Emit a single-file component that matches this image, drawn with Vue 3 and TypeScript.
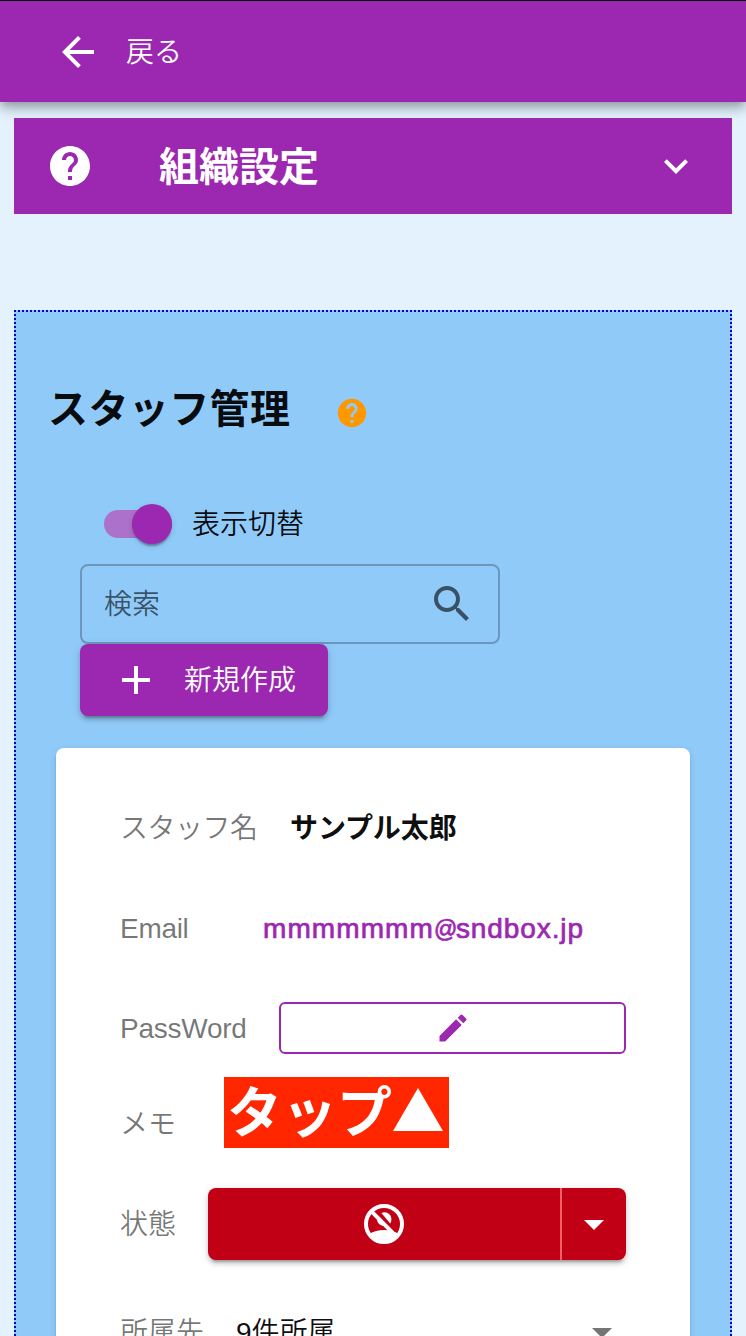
<script setup lang="ts">
import { ref } from 'vue'

const icons = {
  back: 'M20 11H7.83l5.59-5.59L12 4l-8 8 8 8 1.41-1.41L7.83 13H20v-2z',
  help: 'M12 2C6.48 2 2 6.48 2 12s4.48 10 10 10 10-4.48 10-10S17.52 2 12 2zm1 17h-2v-2h2v2zm2.07-7.75l-.9.92C13.45 12.9 13 13.5 13 15h-2v-.5c0-1.1.45-2.1 1.17-2.83l1.24-1.26c.37-.36.59-.86.59-1.41 0-1.1-.9-2-2-2s-2 .9-2 2H8c0-2.21 1.79-4 4-4s4 1.79 4 4c0 .88-.36 1.68-.93 2.25z',
  expand: 'M16.59 8.59L12 13.17 7.41 8.59 6 10l6 6 6-6z',
  search: 'M15.5 14h-.79l-.28-.27C15.41 12.59 16 11.11 16 9.5 16 5.91 13.09 3 9.5 3S3 5.91 3 9.5 5.91 16 9.5 16c1.61 0 3.09-.59 4.23-1.57l.27.28v.79l5 4.99L20.49 19l-4.99-5zm-6 0C7.01 14 5 11.99 5 9.5S7.01 5 9.5 5 14 7.01 14 9.5 11.99 14 9.5 14z',
  add: 'M19 13h-6v6h-2v-6H5v-2h6V5h2v6h6v2z',
  edit: 'M3 17.25V21h3.75L17.81 9.94l-3.75-3.75L3 17.25zM20.71 7.04c.39-.39.39-1.02 0-1.41l-2.34-2.34a.9959.9959 0 00-1.41 0l-1.83 1.83 3.75 3.75 1.83-1.83z',
  drop: 'M7 10l5 5 5-5z',
}
const shown = ref(true)
</script>

<template>
  <div class="page">
    <header class="appbar">
      <svg class="icon" viewBox="0 0 24 24"><path :d="icons.back" /></svg>
      <span class="back-label">戻る</span>
    </header>

    <section class="banner">
      <svg class="icon" viewBox="0 0 24 24"><path :d="icons.help" /></svg>
      <h2>組織設定</h2>
      <svg class="icon" viewBox="0 0 24 24"><path :d="icons.expand" /></svg>
    </section>

    <main class="panel">
      <div class="title-row">
        <h2>スタッフ管理</h2>
        <svg class="hint" viewBox="0 0 24 24"><path :d="icons.help" /></svg>
      </div>

      <div class="toggle-row">
        <button class="switch" :class="{ on: shown }" @click="shown = !shown"><i></i></button>
        <span class="ja">表示切替</span>
      </div>

      <div class="search">
        <span class="ja">検索</span>
        <svg class="icon" viewBox="0 0 24 24"><path :d="icons.search" /></svg>
      </div>

      <button class="create">
        <svg class="icon" viewBox="0 0 24 24"><path :d="icons.add" /></svg>
        <span class="ja">新規作成</span>
      </button>

      <article class="card">
        <div class="row name">
          <span class="label ja">スタッフ名</span>
          <strong class="ja">サンプル太郎</strong>
        </div>
        <div class="row email">
          <span class="label">Email</span>
          <span class="address">mmmmmmm<span class="at">@</span><span class="domain">sndbox.jp</span></span>
        </div>
        <div class="row password">
          <span class="label">PassWord</span>
          <button class="edit">
            <svg viewBox="0 0 24 24"><path :d="icons.edit" /></svg>
          </button>
        </div>
        <div class="row memo">
          <span class="label">メモ</span>
          <span class="tap">タップ<svg viewBox="0 0 50 43"><path d="M25 0L50 43H0z" /></svg></span>
        </div>
        <div class="row state">
          <span class="label ja">状態</span>
          <div class="split">
            <button class="main">
              <svg class="icon" viewBox="0 0 24 24">
                <circle cx="12" cy="12" r="9" fill="none" stroke="currentColor" stroke-width="2" />
                <path d="M4.800 17C6.700 15.700 9.200 15 12 15s5.300.7 7.200 2A9 9 0 0 1 4.800 17z" />
                <path d="M10.700 6.500C13 5.300 15.700 7 15.700 9.500c0 .9-.2 1.600-.6 2.200z" />
                <path d="M8.500 8.600c-.4 2.400 1.300 4.600 4.300 4.400z" />
                <path d="M4.900 6.300L6.300 4.900 19.100 17.700 17.700 19.100z" />
              </svg>
            </button>
            <button class="more">
              <svg class="icon" viewBox="0 0 24 24"><path :d="icons.drop" /></svg>
            </button>
          </div>
        </div>
        <div class="row belong">
          <span class="label ja">所属先</span>
          <span class="count ja">9件所属</span>
          <svg class="icon" viewBox="0 0 24 24"><path :d="icons.drop" /></svg>
        </div>
      </article>
    </main>
  </div>
</template>

<style>
body {
  margin: 0;
  overflow: hidden;
}
</style>

<style scoped>
* {
  box-sizing: border-box;
}
.page {
  height: 1336px;
  overflow: hidden;
  background: #e3f2fd;
  color: rgba(0, 0, 0, 0.95);
  font: 350 28px/40px "Liberation Sans", "Noto Sans CJK JP", sans-serif;
}
svg {
  display: block;
  flex: none;
  fill: currentColor;
}
.icon {
  width: 48px;
  height: 48px;
}
button {
  display: flex;
  align-items: center;
  padding: 0;
  border: 0;
  font: inherit;
  color: #fff;
}
h2 {
  margin: 0;
  padding-top: 2px;
  font-size: 40px;
  line-height: 60px;
  font-weight: 700;
}
.ja {
  padding-top: 2px;
}
.appbar {
  position: relative;
  display: flex;
  align-items: center;
  height: 102px;
  padding: 0 54px;
  border-top: 1px solid #000;
  background: #9c27b0;
  color: #fff;
  box-shadow: 0 4px 8px -2px rgba(0, 0, 0, 0.2), 0 8px 10px rgba(0, 0, 0, 0.14), 0 2px 20px rgba(0, 0, 0, 0.14);
}
.back-label {
  margin-left: 24px;
  padding-top: 3px;
}
.banner {
  position: relative;
  display: flex;
  align-items: center;
  height: 96px;
  margin: 16px 14px 0;
  padding: 0 32px;
  background: #9c27b0;
  color: #fff;
}
.banner h2 {
  flex: 1;
  margin-left: 65px;
}
.panel {
  height: 1100px;
  margin: 96px 14px 0;
  padding: 68px 40px 0 34px;
  background:
    repeating-linear-gradient(90deg, #0000cd 0 2px, transparent 2px 4px) 0 0 / 100% 2px no-repeat,
    repeating-linear-gradient(#0000cd 0 2px, transparent 2px 4px) 0 0 / 2px 100% no-repeat,
    repeating-linear-gradient(#0000cd 0 2px, transparent 2px 4px) 100% 0 / 2px 100% no-repeat,
    #90caf9;
}
.title-row {
  display: flex;
  align-items: center;
  height: 60px;
}
.title-row h2 {
  letter-spacing: 0.4px;
}
.hint {
  width: 34px;
  height: 34px;
  margin: 10px 0 0 45px;
  color: #ff9800;
}
.toggle-row {
  display: flex;
  align-items: center;
  height: 40px;
  margin: 66px 0 0 56px;
}
.switch {
  width: 68px;
  height: 28px;
  margin-right: 20px;
  border-radius: 14px;
  background: #ac72cb;
}
.switch i {
  width: 40px;
  height: 40px;
  border-radius: 50%;
  background: #9c27b0;
  box-shadow: 0 4px 2px -2px rgba(0, 0, 0, 0.2), 0 2px 2px rgba(0, 0, 0, 0.14), 0 2px 6px rgba(0, 0, 0, 0.12);
}
.switch.on {
  justify-content: flex-end;
}
.search {
  display: flex;
  align-items: center;
  justify-content: space-between;
  width: 420px;
  height: 80px;
  margin: 20px 0 0 32px;
  padding: 0 22px;
  border: 2px solid rgba(0, 0, 0, 0.25);
  border-radius: 8px;
  color: rgba(0, 0, 0, 0.6);
}
.create {
  width: 248px;
  height: 72px;
  margin-left: 32px;
  padding-left: 32px;
  gap: 24px;
  border-radius: 8px;
  background: #9c27b0;
  box-shadow: 0 6px 2px -4px rgba(0, 0, 0, 0.2), 0 4px 4px rgba(0, 0, 0, 0.14), 0 2px 10px rgba(0, 0, 0, 0.12);
}
.card {
  width: 634px;
  height: 662px;
  margin: 32px 0 0 8px;
  padding: 60px 64px 0;
  border-radius: 8px;
  background: #fff;
  box-shadow: 0 4px 2px -2px rgba(0, 0, 0, 0.2), 0 2px 2px rgba(0, 0, 0, 0.14), 0 2px 6px rgba(0, 0, 0, 0.12);
}
.row {
  display: flex;
  align-items: center;
}
.label {
  color: rgba(0, 0, 0, 0.54);
}
.name {
  height: 40px;
}
.name .label {
  width: 170px;
  letter-spacing: -0.5px;
}
.name strong {
  font-weight: 700;
  letter-spacing: -0.1px;
}
.email {
  height: 40px;
  margin-top: 61px;
}
.email .label {
  width: 143px;
  letter-spacing: -0.3px;
}
.address {
  color: #9c27b0;
  letter-spacing: 1.1px;
  white-space: nowrap;
  -webkit-text-stroke: 0.7px #9c27b0;
}
.at {
  font-size: 23px;
  letter-spacing: -1.4px;
  vertical-align: 1px;
  line-height: 1;
}
.domain {
  letter-spacing: 0.9px;
}
.password {
  height: 52px;
  margin-top: 53px;
}
.password .label {
  width: 159px;
  padding-top: 2px;
  letter-spacing: -0.25px;
}
.edit {
  flex: 1;
  justify-content: center;
  height: 52px;
  border: 2px solid #9c27b0;
  border-radius: 6px;
  background: #fff;
  color: #9c27b0;
}
.edit svg {
  width: 36px;
  height: 36px;
}
.memo {
  height: 71px;
  margin-top: 23px;
}
.memo .label {
  width: 104px;
  padding-top: 24px;
}
.tap {
  display: flex;
  align-items: center;
  width: 225px;
  height: 71px;
  padding-left: 3px;
  background: #ff2600;
  color: #fff;
  font-size: 55px;
  font-weight: 700;
}
.tap svg {
  width: 50px;
  height: 43px;
  margin: 0 0 6px 1px;
}
.state {
  height: 72px;
  margin-top: 40px;
}
.state .label {
  width: 88px;
}
.split {
  display: flex;
  flex: 1;
  height: 72px;
  border-radius: 8px;
  overflow: hidden;
  background: #c10015;
  box-shadow: 0 6px 2px -4px rgba(0, 0, 0, 0.2), 0 4px 4px rgba(0, 0, 0, 0.14), 0 2px 10px rgba(0, 0, 0, 0.12);
}
.split button {
  justify-content: center;
  background: none;
}
.split .main {
  width: 354px;
  border-right: 2px solid #f0625f;
}
.split .more {
  flex: 1;
}
.belong {
  height: 48px;
  margin-top: 48px;
}
.belong .label {
  width: 116px;
}
.count {
  flex: 1;
}
.belong .icon {
  color: rgba(0, 0, 0, 0.54);
}
</style>
